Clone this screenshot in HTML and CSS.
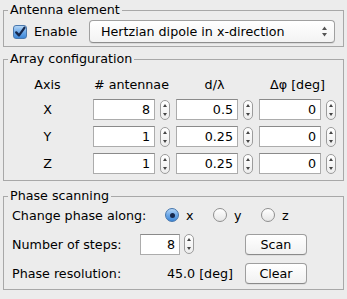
FILE: index.html
```html
<!DOCTYPE html>
<html lang="en">
<head>
  <meta charset="UTF-8">
  <title>Antenna array</title>
  <link rel="stylesheet" href="styles.css">
</head>
<body>
  <div class="window">
    <fieldset class="panel antenna">
      <legend>Antenna element</legend>
      <div class="enable-row">
        <span class="checkbox">
          <svg width="14" height="14" viewBox="0 0 14 14"><path d="M3.2 7.4 L6 10.4 L11.4 2.8" fill="none" stroke="#16284d" stroke-width="2.3" stroke-linecap="round" stroke-linejoin="round"/></svg>
        </span>
        <span class="check-label">Enable</span>
        <div class="combo">
          <span>Hertzian dipole in x-direction</span>
          <svg class="updown" width="7" height="11" viewBox="0 0 7 11"><path d="M3.5 0.5 L6 4 L1 4Z M3.5 10.5 L6 7 L1 7Z" fill="#555"/></svg>
        </div>
      </div>
    </fieldset>

    <fieldset class="panel array">
      <legend>Array configuration</legend>
      <div class="array-grid">
        <div class="head">Axis</div>
        <div class="head"># antennae</div>
        <div class="head">d/λ</div>
        <div class="head">Δφ [deg]</div>

        <div class="axis">X</div>
        <div class="cell"><span class="field">8</span><span class="spinner"><svg width="8" height="18" viewBox="0 0 8 18"><path d="M4 3 L6 6 L2 6Z M4 15 L6 12 L2 12Z" fill="#444"/></svg></span></div>
        <div class="cell"><span class="field">0.5</span><span class="spinner"><svg width="8" height="18" viewBox="0 0 8 18"><path d="M4 3 L6 6 L2 6Z M4 15 L6 12 L2 12Z" fill="#444"/></svg></span></div>
        <div class="cell"><span class="field">0</span><span class="spinner"><svg width="8" height="18" viewBox="0 0 8 18"><path d="M4 3 L6 6 L2 6Z M4 15 L6 12 L2 12Z" fill="#444"/></svg></span></div>

        <div class="axis">Y</div>
        <div class="cell"><span class="field">1</span><span class="spinner"><svg width="8" height="18" viewBox="0 0 8 18"><path d="M4 3 L6 6 L2 6Z M4 15 L6 12 L2 12Z" fill="#444"/></svg></span></div>
        <div class="cell"><span class="field">0.25</span><span class="spinner"><svg width="8" height="18" viewBox="0 0 8 18"><path d="M4 3 L6 6 L2 6Z M4 15 L6 12 L2 12Z" fill="#444"/></svg></span></div>
        <div class="cell"><span class="field">0</span><span class="spinner"><svg width="8" height="18" viewBox="0 0 8 18"><path d="M4 3 L6 6 L2 6Z M4 15 L6 12 L2 12Z" fill="#444"/></svg></span></div>

        <div class="axis">Z</div>
        <div class="cell"><span class="field">1</span><span class="spinner"><svg width="8" height="18" viewBox="0 0 8 18"><path d="M4 3 L6 6 L2 6Z M4 15 L6 12 L2 12Z" fill="#444"/></svg></span></div>
        <div class="cell"><span class="field">0.25</span><span class="spinner"><svg width="8" height="18" viewBox="0 0 8 18"><path d="M4 3 L6 6 L2 6Z M4 15 L6 12 L2 12Z" fill="#444"/></svg></span></div>
        <div class="cell"><span class="field">0</span><span class="spinner"><svg width="8" height="18" viewBox="0 0 8 18"><path d="M4 3 L6 6 L2 6Z M4 15 L6 12 L2 12Z" fill="#444"/></svg></span></div>
      </div>
    </fieldset>

    <fieldset class="panel scanning">
      <legend>Phase scanning</legend>
      <div class="scan-rows">
        <div class="radio-row">
          <span class="row-label">Change phase along:</span>
          <span class="radio-item"><span class="radio on"><span class="dot"></span></span>x</span>
          <span class="radio-item"><span class="radio"></span>y</span>
          <span class="radio-item"><span class="radio"></span>z</span>
        </div>
        <div class="scan-grid">
          <span class="row-label">Number of steps:</span>
          <span class="steps">
            <span class="field small">8</span>
            <span class="spinner"><svg width="8" height="18" viewBox="0 0 8 18"><path d="M4 3 L6 6 L2 6Z M4 15 L6 12 L2 12Z" fill="#444"/></svg></span>
          </span>
          <span class="button">Scan</span>

          <span class="row-label">Phase resolution:</span>
          <span class="value">45.0 [deg]</span>
          <span class="button">Clear</span>
        </div>
      </div>
    </fieldset>
  </div>
</body>
</html>
```

FILE: styles.css
```css
body {
  margin: 0;
  background-color: #ececec;
  font-family: 'DejaVu Sans', sans-serif;
  font-size: 12.7px;
  color: #000;
}

.window {
  display: flex;
  flex-direction: column;
  padding: 2px 3px;
}

.panel {
  margin: 0;
  min-width: 0;
  border: 1px solid #a8a8a8;
  padding: 2px 4px 3px;
}

.panel legend {
  padding: 0 2px;
  line-height: 16px;
}

.array {
  margin-top: 4px;
  padding: 10px 4px 6px;
}

.scanning {
  margin-top: 7px;
  padding: 0 4px 5px;
}

/* antenna element */

.enable-row {
  display: flex;
  align-items: center;
  height: 23px;
}

.checkbox {
  display: flex;
  width: 14px;
  height: 14px;
  box-sizing: border-box;
  margin-left: 5px;
  border: 1px solid #4a78ad;
  border-radius: 3px;
  background: linear-gradient(#b4d6f7, #6ea9e8 50%, #3f88d8);
}

.checkbox svg {
  margin: -1px;
  overflow: visible;
}

.check-label {
  margin-left: 7px;
}

.combo {
  display: flex;
  align-items: center;
  justify-content: space-between;
  width: 246px;
  height: 23px;
  box-sizing: border-box;
  margin-left: auto;
  margin-right: 4px;
  padding: 0 6px 0 11px;
  border: 1px solid #a0a0a0;
  border-bottom-color: #8e8e8e;
  border-radius: 4px;
  background: linear-gradient(#ffffff, #f3f3f3);
  box-shadow: 0 1px 0 rgba(0, 0, 0, 0.08);
}

/* array configuration */

.array-grid {
  display: grid;
  grid-template-columns: 79px repeat(3, 77px);
  column-gap: 6px;
  row-gap: 6px;
  grid-auto-rows: 21px;
  grid-template-rows: 16px;
}

.head {
  text-align: center;
  line-height: 16px;
  margin-bottom: 3px;
}

.axis {
  text-align: center;
  line-height: 21px;
}

.cell {
  display: flex;
  align-items: center;
}

.field {
  flex: 1;
  height: 21px;
  box-sizing: border-box;
  padding-right: 4px;
  border: 1px solid #acacac;
  border-top-color: #8a8a8a;
  background-color: #fff;
  text-align: right;
  line-height: 19px;
}

.spinner {
  display: flex;
  align-items: center;
  justify-content: center;
  width: 10px;
  height: 20px;
  box-sizing: border-box;
  margin-left: 5px;
  border: 1px solid #9c9c9c;
  border-radius: 5px;
  background: linear-gradient(#ffffff, #ededed);
}

/* phase scanning */

.scan-rows {
  display: flex;
  flex-direction: column;
  gap: 7px;
  padding-left: 4px;
}

.radio-row {
  display: flex;
  align-items: center;
  height: 22px;
}

.radio-row .row-label {
  width: 153px;
}

.radio-item {
  display: flex;
  align-items: center;
  gap: 7px;
  width: 48px;
}

.radio {
  display: flex;
  align-items: center;
  justify-content: center;
  width: 14px;
  height: 14px;
  box-sizing: border-box;
  border: 1px solid #8f8f8f;
  border-radius: 50%;
  background: linear-gradient(#ffffff, #e6e6e6);
}

.radio.on {
  border-color: #4676ad;
  background: linear-gradient(#b4d6f7, #6ea9e8 50%, #3f88d8);
}

.dot {
  width: 5px;
  height: 5px;
  border-radius: 50%;
  background-color: #16284d;
}

.scan-grid {
  display: grid;
  grid-template-columns: 116px 93px 62px;
  grid-auto-rows: 22px;
  column-gap: 12px;
  row-gap: 7px;
  align-items: center;
}

.steps {
  display: flex;
  align-items: center;
}

.field.small {
  flex: none;
  width: 40px;
}

.steps .spinner {
  margin-left: 4px;
}

.value {
  text-align: right;
}

.button {
  height: 21px;
  box-sizing: border-box;
  border: 1px solid #9e9e9e;
  border-bottom-color: #8a8a8a;
  border-radius: 4px;
  background: linear-gradient(#ffffff, #f1f1f1);
  text-align: center;
  line-height: 19px;
  box-shadow: 0 1px 0 rgba(0, 0, 0, 0.06);
}
```
